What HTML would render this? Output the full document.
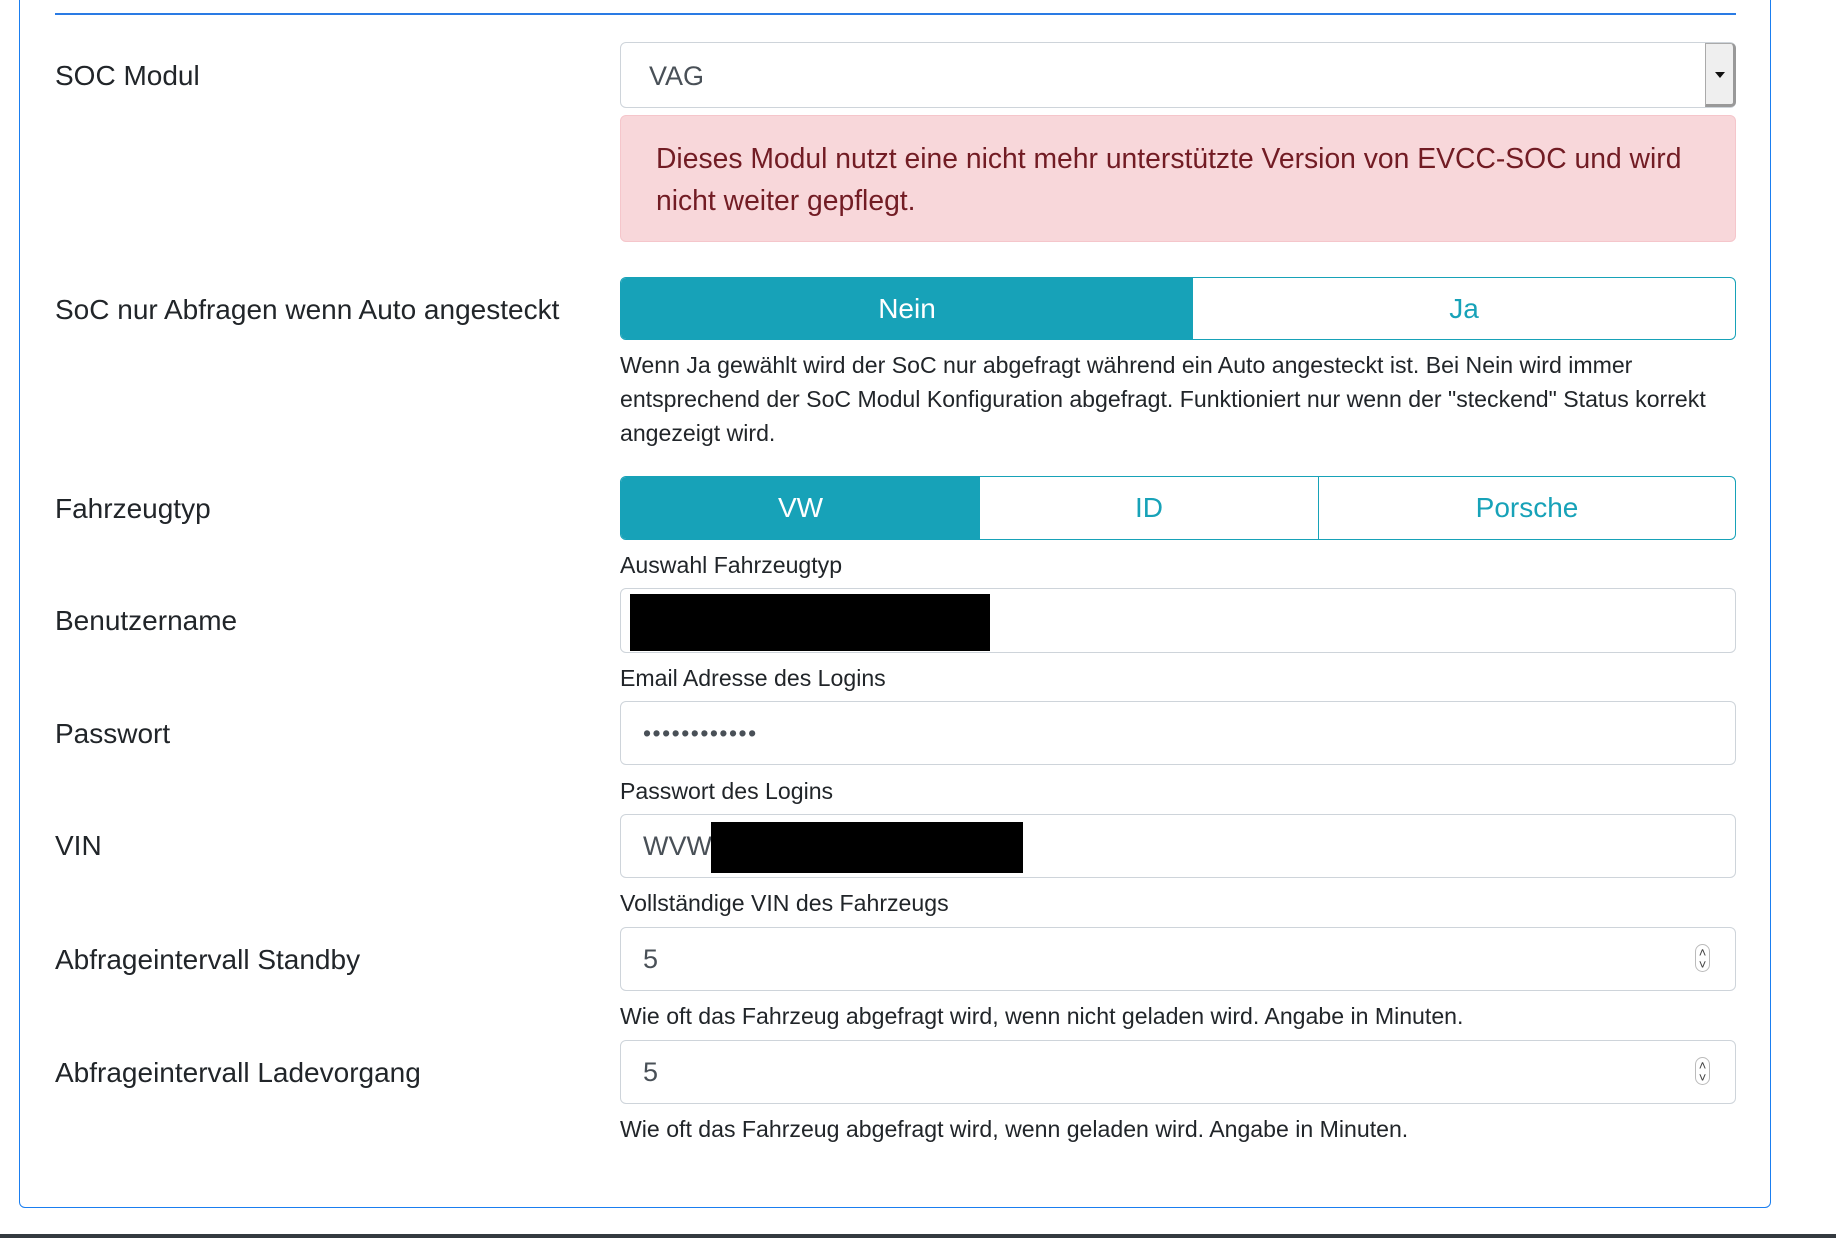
<!DOCTYPE html>
<html><head><meta charset="utf-8"><style>
*{box-sizing:border-box;margin:0;padding:0}
body{width:1836px;height:1238px;background:#fff;position:relative;overflow:hidden;font-family:"Liberation Sans",Helvetica,Arial,sans-serif;color:#212529}
.a{position:absolute}
.card{left:19px;top:-20px;width:1752px;height:1228px;border:1.5px solid #1a7ef0;border-radius:6px}
.hr{left:55px;top:13px;width:1681px;height:2px;background:#2a7be4}
.lbl{left:55px;font-size:28px;line-height:30px;color:#212529}
.inp{left:620px;width:1116px;height:64px;border:1.5px solid #ced4da;border-radius:6px;background:#fff;font-size:27px;color:#495057}
.help{left:620px;font-size:23.1px;line-height:34px;color:#212529;white-space:nowrap}
.bg{left:620px;width:1116px;border:1.5px solid #17a2b8;border-radius:6px;display:flex;overflow:hidden}
.bg div{display:flex;align-items:center;justify-content:center;font-size:28px;color:#17a2b8}
.bg .on{background:#17a2b8;color:#fff}
.blk{background:#000}
.spin{width:15px;height:28px;border:1px solid #bbb;border-radius:8px;font-size:13px;line-height:12px;text-align:center;color:#444;padding-top:2px}
</style></head><body>
<div class="a card"></div>
<div class="a hr"></div>

<div class="a lbl" style="top:61px">SOC Modul</div>
<div class="a inp" style="top:42px;height:66px;padding:18px 0 0 28px">VAG</div>
<div class="a" style="left:1705px;top:43px;width:31px;height:64px;background:#efefef;border:1px solid #aaa;border-right:3px solid #999;border-bottom:3px solid #999;border-radius:0 5px 5px 0"></div>
<div class="a" style="left:1715px;top:72px;width:0;height:0;border-left:5px solid transparent;border-right:5px solid transparent;border-top:6px solid #111"></div>

<div class="a" style="left:620px;top:115px;width:1116px;height:127px;background:#f8d7da;border:1.5px solid #f5c6cb;border-radius:6px;color:#721c24;font-size:28.3px;line-height:42px;padding:21px 0 0 35px">Dieses Modul nutzt eine nicht mehr unterstützte Version von EVCC-SOC und wird<br>nicht weiter gepflegt.</div>

<div class="a lbl" style="top:295px">SoC nur Abfragen wenn Auto angesteckt</div>
<div class="a bg" style="top:277px;height:63px"><div class="on" style="width:572px">Nein</div><div style="flex:1">Ja</div></div>
<div class="a help" style="top:348px">Wenn Ja gewählt wird der SoC nur abgefragt während ein Auto angesteckt ist. Bei Nein wird immer<br>entsprechend der SoC Modul Konfiguration abgefragt. Funktioniert nur wenn der "steckend" Status korrekt<br>angezeigt wird.</div>

<div class="a lbl" style="top:494px">Fahrzeugtyp</div>
<div class="a bg" style="top:476px;height:64px"><div class="on" style="width:359px">VW</div><div style="width:339px;border-right:1.5px solid #17a2b8">ID</div><div style="flex:1">Porsche</div></div>
<div class="a help" style="top:548px">Auswahl Fahrzeugtyp</div>

<div class="a lbl" style="top:606px">Benutzername</div>
<div class="a inp" style="top:588px;height:65px"></div>
<div class="a blk" style="left:630px;top:594px;width:360px;height:57px"></div>
<div class="a help" style="top:661px">Email Adresse des Logins</div>

<div class="a lbl" style="top:719px">Passwort</div>
<div class="a inp" style="top:701px;padding:18px 0 0 22px;font-size:23px;letter-spacing:1.5px">••••••••••••</div>
<div class="a help" style="top:774px">Passwort des Logins</div>

<div class="a lbl" style="top:831px">VIN</div>
<div class="a inp" style="top:814px;padding:16px 0 0 22px">WVW</div>
<div class="a blk" style="left:711px;top:822px;width:312px;height:51px"></div>
<div class="a help" style="top:886px">Vollständige VIN des Fahrzeugs</div>

<div class="a lbl" style="top:945px">Abfrageintervall Standby</div>
<div class="a inp" style="top:927px;padding:16px 0 0 22px">5</div>
<div class="a spin" style="left:1695px;top:944px">˄<br>˅</div>
<div class="a help" style="top:999px">Wie oft das Fahrzeug abgefragt wird, wenn nicht geladen wird. Angabe in Minuten.</div>

<div class="a lbl" style="top:1058px">Abfrageintervall Ladevorgang</div>
<div class="a inp" style="top:1040px;padding:16px 0 0 22px">5</div>
<div class="a spin" style="left:1695px;top:1057px">˄<br>˅</div>
<div class="a help" style="top:1112px">Wie oft das Fahrzeug abgefragt wird, wenn geladen wird. Angabe in Minuten.</div>

<div class="a" style="left:0;top:1234px;width:1836px;height:4px;background:#343a40"></div>
</body></html>
